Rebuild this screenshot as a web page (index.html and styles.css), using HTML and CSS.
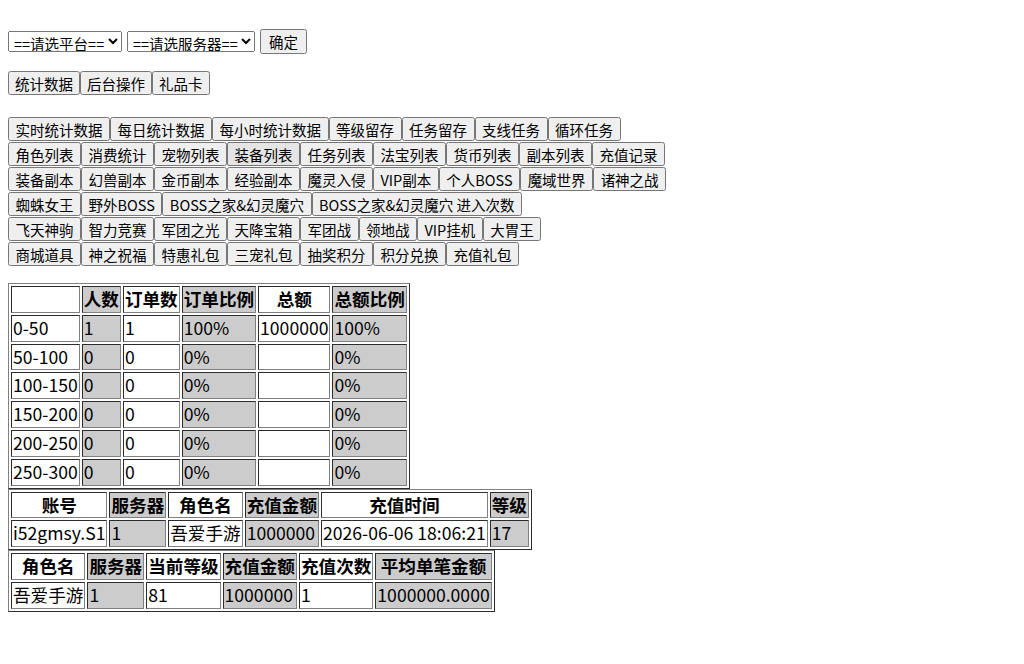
FILE: index.html
```html
<!doctype html>
<html lang="zh-CN">
<head>
	<meta charset="utf-8">
	<title>后台统计</title>
	<link rel="stylesheet" href="styles.css">
</head>
<body>
	<div class="picker">
		<select><option>==请选平台==</option></select>
		<select><option>==请选服务器==</option></select>
		<button>确定</button>
	</div>

	<div class="tabs"><button>统计数据</button><button>后台操作</button><button>礼品卡</button></div>

	<div class="menu">
		<button>实时统计数据</button><button>每日统计数据</button><button>每小时统计数据</button><button>等级留存</button><button>任务留存</button><button>支线任务</button><button>循环任务</button><br>
		<button>角色列表</button><button>消费统计</button><button>宠物列表</button><button class="on">装备列表</button><button>任务列表</button><button>法宝列表</button><button>货币列表</button><button>副本列表</button><button>充值记录</button><br>
		<button>装备副本</button><button>幻兽副本</button><button>金币副本</button><button>经验副本</button><button>魔灵入侵</button><button>VIP副本</button><button>个人BOSS</button><button>魔域世界</button><button>诸神之战</button><br>
		<button>蜘蛛女王</button><button>野外BOSS</button><button>BOSS之家&amp;幻灵魔穴</button><button>BOSS之家&amp;幻灵魔穴 进入次数</button><br>
		<button>飞天神驹</button><button>智力竞赛</button><button>军团之光</button><button>天降宝箱</button><button>军团战</button><button>领地战</button><button>VIP挂机</button><button>大胃王</button><br>
		<button>商城道具</button><button>神之祝福</button><button>特惠礼包</button><button>三宠礼包</button><button>抽奖积分</button><button>积分兑换</button><button>充值礼包</button>
	</div>

	<table class="grid" border="1">
		<tr><th></th><th>人数</th><th>订单数</th><th>订单比例</th><th>总额</th><th>总额比例</th></tr>
		<tr><td>0-50</td><td>1</td><td>1</td><td>100%</td><td>1000000</td><td>100%</td></tr>
		<tr><td>50-100</td><td>0</td><td>0</td><td>0%</td><td></td><td>0%</td></tr>
		<tr><td>100-150</td><td>0</td><td>0</td><td>0%</td><td></td><td>0%</td></tr>
		<tr><td>150-200</td><td>0</td><td>0</td><td>0%</td><td></td><td>0%</td></tr>
		<tr><td>200-250</td><td>0</td><td>0</td><td>0%</td><td></td><td>0%</td></tr>
		<tr><td>250-300</td><td>0</td><td>0</td><td>0%</td><td></td><td>0%</td></tr>
	</table>

	<table class="grid" border="1">
		<tr><th>账号</th><th>服务器</th><th>角色名</th><th>充值金额</th><th>充值时间</th><th>等级</th></tr>
		<tr><td>i52gmsy.S1</td><td>1</td><td>吾爱手游</td><td>1000000</td><td>2026-06-06 18:06:21</td><td>17</td></tr>
	</table>

	<table class="grid" border="1">
		<tr><th>角色名</th><th>服务器</th><th>当前等级</th><th>充值金额</th><th>充值次数</th><th>平均单笔金额</th></tr>
		<tr><td>吾爱手游</td><td>1</td><td>81</td><td>1000000</td><td>1</td><td>1000000.0000</td></tr>
	</table>
</body>
</html>
```

FILE: styles.css
```css
body {
	margin: 8px;
	font-family: "Noto Sans CJK SC", sans-serif;
	font-size: 17.6px;
	color: #000;
}

button, select {
	font-family: "Noto Sans CJK SC", sans-serif;
	font-size: 14.5px;
}

.picker {
	display: flex;
	align-items: center;
	gap: 5px;
	margin-top: 21px;
}

.picker select {
	height: 21px;
	padding: 0 0 0 1px;
}

.picker button {
	height: 25px;
	padding: 0 7px;
}

.tabs {
	margin-top: 17px;
	line-height: 24px;
}

.tabs button {
	height: 24px;
	padding: 0 5px;
	vertical-align: top;
}

.menu {
	margin-top: 22px;
	margin-bottom: 16px;
	line-height: 25px;
}

.menu button {
	margin: 0;
	height: 24px;
	padding: 0 5.5px;
	vertical-align: top;
}

.menu .on {
	background: #e5e5e5;
	border: 1px solid #767676;
	border-radius: 2px;
	padding: 0 6.5px;
}

.grid {
	line-height: 22.8px;
}

.grid th:nth-child(even),
.grid td:nth-child(even) {
	background: #ccc;
}
```
